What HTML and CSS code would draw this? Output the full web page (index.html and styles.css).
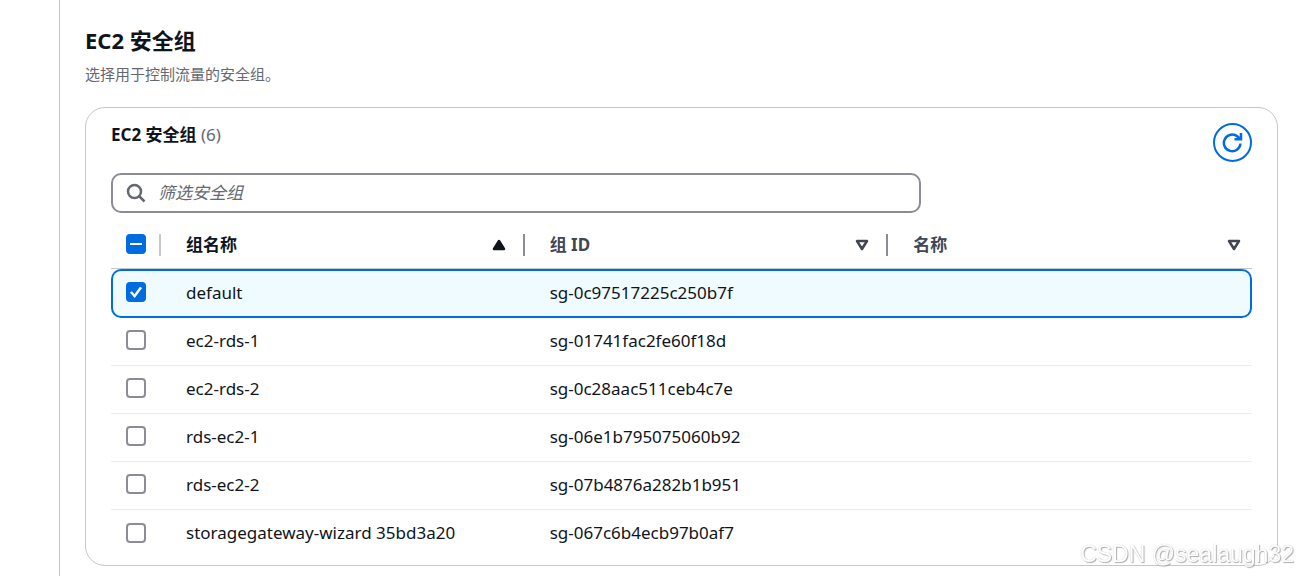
FILE: index.html
```html
<!DOCTYPE html>
<html lang="zh-CN">
<head>
<meta charset="utf-8">
<meta name="viewport" content="width=device-width, initial-scale=1">
<title>EC2 安全组</title>
<link rel="stylesheet" href="styles.css">
</head>
<body>
<main class="panel">
  <header class="section-head">
    <h2 class="section-title">EC2 安全组</h2>
    <p class="section-desc">选择用于控制流量的安全组。</p>
  </header>
  <section class="card" aria-labelledby="card-title">
    <div class="card-head">
      <h3 class="card-title" id="card-title">EC2 安全组 <span class="count">(6)</span></h3>
      <button class="refresh" type="button" aria-label="刷新">
        <svg class="refresh-icon" viewBox="0 0 21 21" aria-hidden="true"><path d="M18.500 11.500A8.300 8.300 0 1 1 15.500 4.500L18 7M19 1V7.200H12.500"/></svg>
      </button>
    </div>
    <label class="search">
      <svg class="search-icon" viewBox="0 0 20 20" aria-hidden="true"><circle cx="8.500" cy="8.500" r="6.500"/><path d="M13 13L18.500 18.500"/></svg>
      <input class="search-input" type="search" placeholder="筛选安全组" aria-label="筛选安全组">
    </label>
    <table class="table">
      <colgroup><col class="col-check"><col><col><col></colgroup>
      <thead>
        <tr>
          <th scope="col"><div class="th-inner th-check"><input class="checkbox" id="select-all" type="checkbox" aria-label="全选"></div></th>
          <th scope="col" aria-sort="ascending"><div class="th-inner th-sorted">组名称<svg class="sort" viewBox="0 0 14 12" aria-hidden="true"><path class="sort-fill" d="M7 2L12 10H2Z"/></svg></div></th>
          <th scope="col"><div class="th-inner">组 ID<svg class="sort" viewBox="0 0 14 12" aria-hidden="true"><path d="M2 2H12L7 10Z"/></svg></div></th>
          <th scope="col"><div class="th-inner th-last">名称<svg class="sort" viewBox="0 0 14 12" aria-hidden="true"><path d="M2 2H12L7 10Z"/></svg></div></th>
        </tr>
      </thead>
      <tbody>
        <tr class="selected"><td class="cell-check"><input class="checkbox" type="checkbox" aria-labelledby="g1" checked></td><td id="g1">default</td><td>sg-0c97517225c250b7f</td><td></td></tr>
        <tr><td class="cell-check"><input class="checkbox" type="checkbox" aria-labelledby="g2"></td><td id="g2">ec2-rds-1</td><td>sg-01741fac2fe60f18d</td><td></td></tr>
        <tr><td class="cell-check"><input class="checkbox" type="checkbox" aria-labelledby="g3"></td><td id="g3">ec2-rds-2</td><td>sg-0c28aac511ceb4c7e</td><td></td></tr>
        <tr><td class="cell-check"><input class="checkbox" type="checkbox" aria-labelledby="g4"></td><td id="g4">rds-ec2-1</td><td>sg-06e1b795075060b92</td><td></td></tr>
        <tr><td class="cell-check"><input class="checkbox" type="checkbox" aria-labelledby="g5"></td><td id="g5">rds-ec2-2</td><td>sg-07b4876a282b1b951</td><td></td></tr>
        <tr><td class="cell-check"><input class="checkbox" type="checkbox" aria-labelledby="g6"></td><td id="g6">storagegateway-wizard 35bd3a20</td><td>sg-067c6b4ecb97b0af7</td><td></td></tr>
      </tbody>
    </table>
  </section>
</main>
<div class="watermark">CSDN @sealaugh32</div>
<script src="app.js"></script>
</body>
</html>
```
FILE: styles.css
```css
* { box-sizing: border-box; }

body {
  margin: 0;
  background: #fff;
  color: #0f141a;
  font-family: "Noto Sans", "Noto Sans CJK SC", sans-serif;
  font-size: 17px;
  line-height: 24px;
}

.panel {
  margin-left: 59px;
  padding: 26px 20px 10px 25px;
  border-left: 1px solid #c6c6cd;
}

.section-head { margin-bottom: 20px; }

.section-title {
  margin: 0;
  font-size: 22px;
  line-height: 28px;
}

.section-desc {
  margin: 8px 0 0;
  color: #656871;
  font-size: 15px;
  line-height: 25px;
}

.card {
  padding: 15px 25px 7px;
  border: 1px solid #c6c6cd;
  border-radius: 20px;
}

.card-head {
  display: flex;
  align-items: flex-start;
  justify-content: space-between;
}

.card-title {
  margin: 0;
  font-size: 17px;
  line-height: 24px;
}

.count {
  color: #656871;
  font-weight: 400;
}

.refresh {
  display: grid;
  place-items: center;
  width: 39px;
  height: 39px;
  padding: 0;
  border: 2px solid #006ce0;
  border-radius: 50%;
  background: #fff;
}

.refresh-icon {
  width: 21px;
  height: 21px;
  fill: none;
  stroke: #006ce0;
  stroke-width: 2.5;
}

.search {
  display: flex;
  align-items: center;
  gap: 12px;
  width: 71%;
  height: 40px;
  margin-top: 11px;
  padding: 0 13px;
  border: 2px solid #8c8c94;
  border-radius: 10px;
}

.search-icon {
  flex: none;
  width: 20px;
  height: 20px;
  fill: none;
  stroke: #656871;
  stroke-width: 2.5;
}

.search-input {
  flex: 1;
  min-width: 0;
  padding: 0;
  border: 0;
  outline: 0;
  background: none;
  color: inherit;
  font: inherit;
}

.search-input::placeholder {
  color: #656871;
  font-style: italic;
}

.table {
  width: 100%;
  margin-top: 8px;
  border-collapse: separate;
  border-spacing: 0;
  table-layout: fixed;
}

.col-check { width: 50px; }

th {
  padding: 13px 0 12px;
  border-bottom: 1px solid #c6c6cd;
  color: #424650;
  text-align: left;
}

.th-inner {
  display: flex;
  align-items: center;
  justify-content: space-between;
  height: 22px;
  padding: 0 17px 0 25px;
  border-right: 2px solid #8c8c94;
}

.th-check {
  padding: 0 0 0 15px;
  border-color: #c6c6cd;
}

.th-check .checkbox { margin-bottom: 2px; }

.th-sorted { color: #0f141a; }

.th-last {
  padding-right: 11px;
  border-right: 0;
}

.sort {
  width: 14px;
  height: 12px;
  fill: none;
  stroke: currentColor;
  stroke-width: 2.5;
  stroke-linejoin: round;
}

.sort-fill { fill: currentColor; }

td {
  height: 48px;
  padding: 0 25px 2px;
  border-bottom: 1px solid #ebebf0;
}

.cell-check { padding: 0 0 3px 15px; }

tr:last-child td { border-bottom: 0; }

.selected td {
  height: 49px;
  border-top: 2px solid #006ce0;
  border-bottom: 2px solid #006ce0;
  background: #f0fbff;
}

.selected td:first-child {
  padding-left: 13px;
  border-left: 2px solid #006ce0;
  border-radius: 10px 0 0 10px;
}

.selected td:last-child {
  border-right: 2px solid #006ce0;
  border-radius: 0 10px 10px 0;
}

.checkbox {
  display: grid;
  place-content: center;
  width: 20px;
  height: 20px;
  margin: 0;
  border: 2px solid #8c8c94;
  border-radius: 4px;
  background: #fff;
  appearance: none;
}

.checkbox:checked,
.checkbox:indeterminate {
  border-color: #006ce0;
  background: #006ce0;
}

.checkbox:checked::before {
  width: 14px;
  height: 14px;
  background: #fff;
  clip-path: polygon(7% 55%, 21% 44%, 39% 66%, 78% 12%, 93% 22%, 41% 93%);
  content: "";
}

.checkbox:indeterminate::before {
  width: 12px;
  height: 2px;
  background: #fff;
  content: "";
}

.watermark {
  position: fixed;
  right: 4px;
  bottom: 8px;
  color: #fff;
  font-family: "Liberation Sans", sans-serif;
  font-size: 23px;
  line-height: 28px;
  text-shadow: 1px 1px 1px #999, 0 0 1px #aaa;
  opacity: 0.8;
  pointer-events: none;
}
```
FILE: app.js
```js
const selectAll = document.getElementById("select-all");
const rowBoxes = [...document.querySelectorAll(".cell-check .checkbox")];

function sync() {
  const count = rowBoxes.filter((box) => box.checked).length;
  selectAll.checked = count === rowBoxes.length;
  selectAll.indeterminate = count > 0 && count < rowBoxes.length;
  rowBoxes.forEach((box) => box.closest("tr").classList.toggle("selected", box.checked));
}

rowBoxes.forEach((box) => box.addEventListener("change", sync));
selectAll.addEventListener("change", () => {
  rowBoxes.forEach((box) => { box.checked = selectAll.checked; });
  sync();
});
sync();
```
